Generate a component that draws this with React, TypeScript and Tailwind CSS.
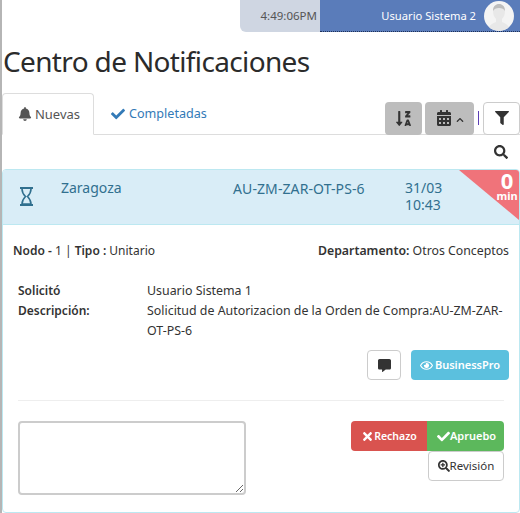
import { FaBell, FaCheck, FaSortAlphaDownAlt, FaCalendarAlt, FaChevronUp, FaFilter, FaSearch, FaCommentAlt, FaRegEye, FaTimes, FaSearchPlus } from "react-icons/fa";

const Hourglass = () => (
  <svg width="13" height="19" viewBox="0 0 13 19" className="text-[#31708f]">
    <path d="M0 1h13M0 18h13" stroke="currentColor" strokeWidth="2" />
    <path d="M2 2c0 4 1.500 5.500 3.500 7.500C3.500 11.500 2 13 2 17h9c0-4-1.500-5.500-3.500-7.500C9.500 7.500 11 6 11 2" fill="none" stroke="currentColor" strokeWidth="1.600" />
  </svg>
);

const App = () => {
  return (
    <div className="w-[520px] h-[513px] overflow-hidden bg-white text-[#333] font-['Noto_Sans',sans-serif] text-[13px] leading-5 border-l-2 border-[#b5b5b5]">
      <div className="flex justify-end h-8">
        <div className="w-20 bg-[#cfd6e2] rounded-bl-md flex items-center justify-end pr-[3px] text-[11.5px] text-[#555]">4:49:06PM</div>
        <div className="w-[200px] bg-[#5a7cba] border-b border-dotted border-[#1f3158] flex items-center justify-end pr-1.5 text-[11.2px] text-white">
          Usuario Sistema 2
          <div className="ml-2 w-[30px] h-[30px] rounded-full bg-[#f4f4f4] flex items-center justify-center overflow-hidden">
            <svg width="30" height="30" viewBox="0 0 30 30">
              <path d="M4 30c1-7 6-8 8-9v-3c-2-2-3-5-3-8 0-5 3-7 6-7s6 2 6 7c0 3-1 6-3 8v3c2 1 7 2 8 9z" fill="#e8e8e8" />
              <path d="M9 10c0-5 3-7 6-7s6 2 6 7c-1-2-3-3-6-3s-5 1-6 3z" fill="#bdbdbd" />
            </svg>
          </div>
        </div>
      </div>

      <h1 className="mt-[9px] ml-px text-[28px] leading-[40px] tracking-[-0.65px] text-[#2b2b2b]">Centro de Notificaciones</h1>

      <div className="mt-3 flex items-end h-[42px] border-b border-[#ddd]">
        <div className="w-[92px] h-[42px] -mb-px bg-white border border-[#ddd] border-b-white rounded-t flex items-center justify-center gap-[3px] pl-0.5">
          <FaBell className="text-[14px] text-[#555]" />
          <span className="text-[#555]">Nuevas</span>
        </div>
        <div className="ml-[17px] h-[41px] flex items-center gap-1 text-[12.6px] text-[#337ab7]">
          <FaCheck className="text-[14px]" />
          <span>Completadas</span>
        </div>
        <div className="ml-auto flex items-center h-[34px] -mb-px">
          <div className="w-[37px] h-[33px] bg-[#bdbdbd] rounded flex items-center justify-center">
            <FaSortAlphaDownAlt className="text-[17px] text-[#333]" />
          </div>
          <div className="ml-[3px] w-[49px] h-[33px] bg-[#bdbdbd] rounded flex items-center justify-center gap-1">
            <FaCalendarAlt className="text-[16px] text-[#333]" />
            <FaChevronUp className="text-[8px] text-[#333] mt-1" />
          </div>
          <div className="ml-[4px] w-px h-[14px] bg-[#5b3db5]" />
          <div className="ml-[4px] w-[37px] h-[33px] bg-white border border-[#ccc] rounded flex items-center justify-center">
            <FaFilter className="text-[14px] text-[#333]" />
          </div>
        </div>
      </div>

      <div className="h-[34px] flex items-center justify-end pr-3">
        <FaSearch className="text-[14px] text-[#333]" />
      </div>

      <div className="relative h-[344px] border border-[#bce8f1] rounded overflow-hidden">
        <div className="h-[55px] bg-[#d9edf7] border-b border-[#bce8f1] text-[#31708f] flex text-[14px]">
          <div className="w-[58px] pl-[17px] pt-[17px]"><Hourglass /></div>
          <div className="w-[172px] pt-[8px]">Zaragoza</div>
          <div className="w-[172px] pt-[9px] tracking-[0.1px]">AU-ZM-ZAR-OT-PS-6</div>
          <div className="pt-[9px] leading-[17px]">31/03<br />10:43</div>
        </div>
        <svg width="60" height="50" viewBox="0 0 60 50" className="absolute top-0 right-0">
          <path d="M0 0h60v50z" fill="#f0737a" />
        </svg>
        <div className="absolute top-0 right-0 w-[24px] text-white font-bold text-center">
          <div className="text-[22px] leading-[20px]">0</div>
          <div className="text-[11px] leading-[12px]">min</div>
        </div>

        <div className="flex justify-between pl-[10px] pr-[10px] pt-[16px] text-[12px]">
          <div><b className="font-semibold">Nodo -</b> 1 | <b className="font-semibold">Tipo :</b> Unitario</div>
          <div className="text-[12.3px]"><b className="font-semibold">Departamento:</b> Otros Conceptos</div>
        </div>

        <div className="mt-[20px] pl-[15px] pr-[10px] text-[12.4px]">
          <div className="flex">
            <b className="w-[129px] shrink-0 font-semibold text-[12px]">Solicitó</b>
            <span>Usuario Sistema 1</span>
          </div>
          <div className="flex">
            <b className="w-[129px] shrink-0 font-semibold text-[12px]">Descripción:</b>
            <span>Solicitud de Autorizacion de la Orden de Compra:AU-ZM-ZAR-OT-PS-6</span>
          </div>
        </div>

        <div className="mt-[9px] pr-[10px] flex justify-end gap-[10px]">
          <div className="w-[34px] h-[30px] border border-[#ccc] rounded flex items-center justify-center">
            <FaCommentAlt className="text-[13px] text-[#333]" />
          </div>
          <div className="w-[98px] h-[30px] bg-[#5bc0de] rounded text-white text-[11px] font-semibold flex items-center justify-center gap-0.5">
            <FaRegEye className="text-[13px]" />BusinessPro
          </div>
        </div>

        <div className="mt-[20px] mx-[15px] border-t border-[#eee]" />

        <div className="mt-[20px] pl-[15px] pr-[15px] flex justify-between">
          <textarea className="w-[228px] h-[74px] border-2 border-[#ccc] rounded" />
          <div className="w-[153px]">
            <div className="flex">
              <div className="w-[76px] h-[30px] bg-[#d9534f] rounded-l text-white text-[10.5px] font-semibold flex items-center justify-center">
                <FaTimes className="text-[13px]" />Rechazo
              </div>
              <div className="w-[77px] h-[30px] bg-[#5cb85c] rounded-r text-white text-[11px] font-semibold flex items-center justify-center pl-0.5">
                <FaCheck className="text-[13px]" />Apruebo
              </div>
            </div>
            <div className="ml-[77px] w-[76px] h-[30px] border border-[#ccc] rounded text-[11.5px] flex items-center justify-center">
              <FaSearchPlus className="text-[12px]" />Revisión
            </div>
          </div>
        </div>
      </div>
    </div>
  );
};

export default App;
